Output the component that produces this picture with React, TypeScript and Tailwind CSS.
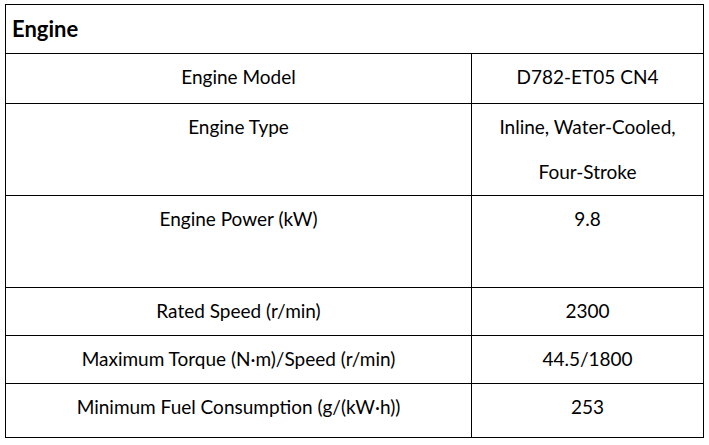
const rows: { label: string; value: string[]; h: string }[] = [
  { label: "Engine Model", value: ["D782-ET05 CN4"], h: "h-[50px]" },
  { label: "Engine Type", value: ["Inline, Water-Cooled,", "Four-Stroke"], h: "h-[92px]" },
  { label: "Engine Power (kW)", value: ["9.8"], h: "h-[92px]" },
  { label: "Rated Speed (r/min)", value: ["2300"], h: "h-[48px]" },
  { label: "Maximum Torque (N·m)/Speed (r/min)", value: ["44.5/1800"], h: "h-[48px]" },
  { label: "Minimum Fuel Consumption (g/(kW·h))", value: ["253"], h: "h-[53px]" },
];

export default function App() {
  return (
    <div className="min-h-[445px] w-[709px] bg-white pl-[5px] pt-[4px] font-['Lato',sans-serif] text-[19px] text-black">
      <div className="w-[699px] border border-black">
        <div className="h-[49px] border-b border-black pl-[6px] text-[22px] font-bold leading-[47px]">
          Engine
        </div>
        {rows.map((r, i) => (
          <div
            key={r.label}
            className={`grid grid-cols-[466px_1fr] ${r.h} ${
              i < rows.length - 1 ? "border-b border-black" : ""
            }`}
          >
            <div className="border-r border-black text-center leading-[45px]">
              {r.label}
            </div>
            <div className="text-center leading-[45px]">
              {r.value.map((v) => (
                <div key={v}>{v}</div>
              ))}
            </div>
          </div>
        ))}
      </div>
    </div>
  );
}
